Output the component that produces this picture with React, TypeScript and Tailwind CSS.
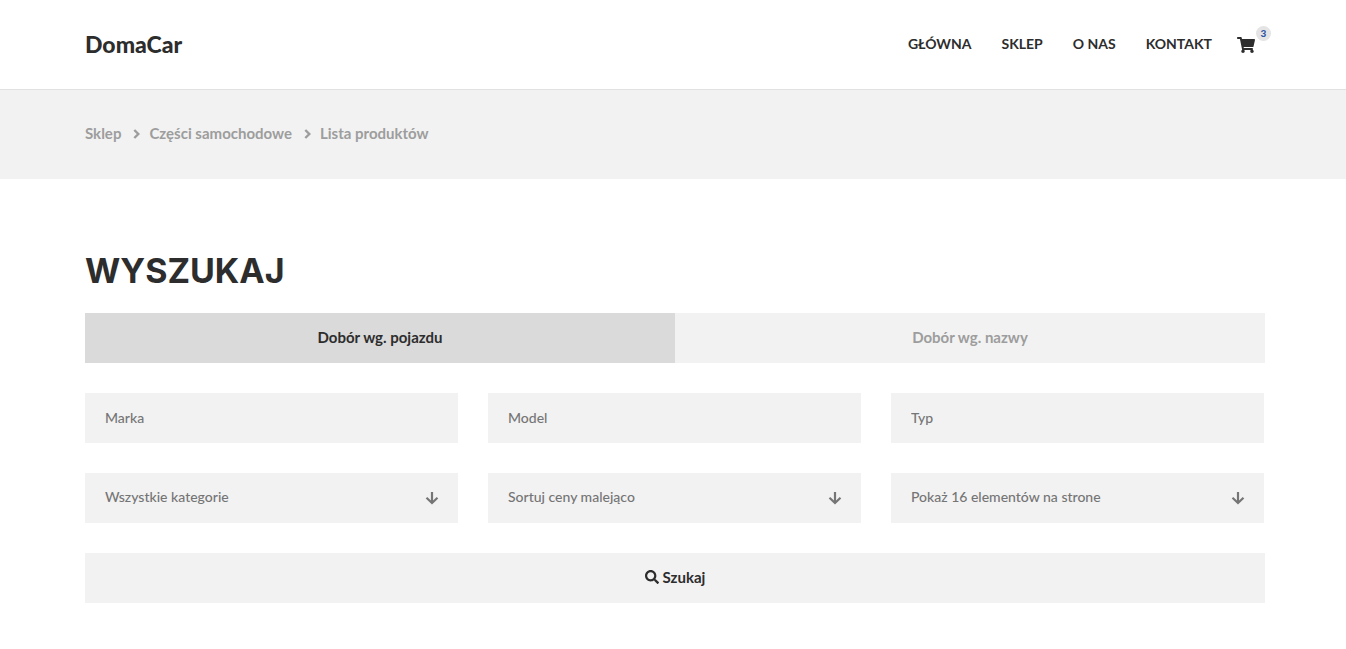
import { useState } from "react";
import type { ReactNode } from "react";
import { FaSearch, FaShoppingCart } from "react-icons/fa";

const navLinks = ["Główna", "Sklep", "O nas", "Kontakt"];
const crumbs = ["Sklep", "Części samochodowe", "Lista produktów"];
const fields = ["Marka", "Model", "Typ"];
const selects = [
  { label: "Kategoria", options: ["Wszystkie kategorie"] },
  { label: "Sortowanie", options: ["Sortuj ceny malejąco", "Sortuj ceny rosnąco"] },
  { label: "Liczba elementów", options: ["Pokaż 16 elementów na strone", "Pokaż 32 elementów na strone"] },
];

function Container({ children }: { children: ReactNode }) {
  return (
    <div className="pl-1">
      <div className="mx-auto max-w-[1180px]">{children}</div>
    </div>
  );
}

function Chevron() {
  return (
    <svg viewBox="0 0 8 10" className="h-[10px] w-2" fill="none" stroke="currentColor" strokeWidth="2.4" aria-hidden="true">
      <path d="M1.3 1 5.3 5 1.3 9" />
    </svg>
  );
}

function ArrowDown() {
  return (
    <svg
      viewBox="0 0 14 14"
      className="pointer-events-none absolute top-1/2 right-[19px] size-[14px] -translate-y-1/2"
      fill="none"
      stroke="currentColor"
      strokeWidth="2.2"
      aria-hidden="true"
    >
      <path d="M7 1V12M1.5 6.8 7 12 12.5 6.8" />
    </svg>
  );
}

function Header() {
  return (
    <header className="border-b border-[#e1e1e1]">
      <Container>
        <div className="flex h-[89px] items-center justify-between pb-px">
          <a href="#" className="text-[23px] font-black">
            DomaCar
          </a>
          <nav className="flex items-center">
            <ul className="flex gap-[30px] text-sm font-bold uppercase">
              {navLinks.map((link) => (
                <li key={link}>
                  <a href="#">{link}</a>
                </li>
              ))}
            </ul>
            <a href="#" aria-label="Koszyk" className="relative mr-2.5 ml-[25px] pt-0.5">
              <FaShoppingCart className="size-[18px]" />
              <span className="absolute -top-2 -right-4 flex size-[15px] items-center justify-center rounded-full bg-[#e4e4e4] text-[10px] font-black text-[#3154a5]">
                3
              </span>
            </a>
          </nav>
        </div>
      </Container>
    </header>
  );
}

function Breadcrumbs() {
  return (
    <div className="bg-[#f2f2f2]">
      <Container>
        <ol className="flex h-[89px] items-center gap-2 pb-0.5 text-[15px] font-bold text-[#9d9d9d]">
          {crumbs.map((crumb, index) => (
            <li key={crumb} className="flex items-center gap-3">
              <a href="#">{crumb}</a>
              {index < crumbs.length - 1 && <Chevron />}
            </li>
          ))}
        </ol>
      </Container>
    </div>
  );
}

function SearchForm() {
  const [tab, setTab] = useState(0);
  return (
    <form onSubmit={(event) => event.preventDefault()}>
      <div role="tablist" className="grid grid-cols-2">
        {["Dobór wg. pojazdu", "Dobór wg. nazwy"].map((label, index) => (
          <button
            key={label}
            type="button"
            role="tab"
            aria-selected={tab === index}
            onClick={() => setTab(index)}
            className={
              tab === index
                ? "h-[50px] bg-[#dadada] pb-0.5 text-[15px] font-bold"
                : "h-[50px] bg-[#f2f2f2] pb-0.5 text-[15px] font-bold text-[#9d9d9d]"
            }
          >
            {label}
          </button>
        ))}
      </div>
      <div className="mt-[30px] grid grid-cols-3 gap-[30px] pr-px text-sm text-[#757575]">
        {fields.map((field) => (
          <input
            key={field}
            type="text"
            aria-label={field}
            placeholder={field}
            className="h-[50px] min-w-0 bg-[#f2f2f2] px-5 pb-0.5 font-medium placeholder:text-[#757575]"
          />
        ))}
        {selects.map(({ label, options }) => (
          <div key={label} className="relative">
            <select
              aria-label={label}
              className="h-[50px] w-full appearance-none bg-[#f2f2f2] pr-10 pb-0.5 pl-5 font-medium"
            >
              {options.map((option) => (
                <option key={option}>{option}</option>
              ))}
            </select>
            <ArrowDown />
          </div>
        ))}
      </div>
      <button
        type="submit"
        className="mt-[30px] flex h-[50px] w-full items-center justify-center gap-1 bg-[#f2f2f2] pb-0.5 text-[15px] font-bold"
      >
        <FaSearch className="size-[14px]" />
        Szukaj
      </button>
    </form>
  );
}

export default function App() {
  return (
    <div className="bg-white font-['Lato','Open_Sans',sans-serif] text-[#2d2d2d]">
      <Header />
      <Breadcrumbs />
      <main className="pt-[70px] pb-12">
        <Container>
          <h1 className="mb-5 font-['Inter',sans-serif] text-[34px] leading-[44px] font-bold">WYSZUKAJ</h1>
          <SearchForm />
        </Container>
      </main>
    </div>
  );
}
